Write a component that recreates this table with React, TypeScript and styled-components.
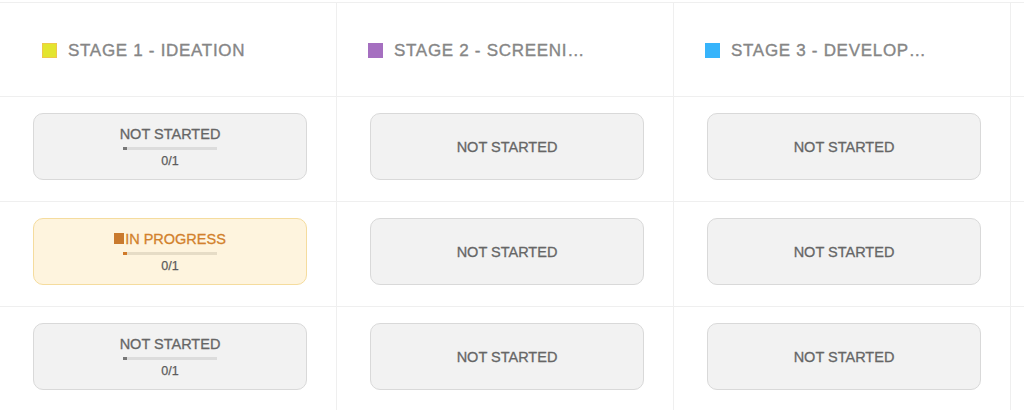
import React from "react";
import styled, { createGlobalStyle } from "styled-components";

const GlobalStyle = createGlobalStyle`
  html, body { margin: 0; padding: 0; background: #ffffff; }
  body {
    font-family: "Liberation Sans", Arial, sans-serif;
    overflow: hidden;
    width: 1024px;
    height: 410px;
  }
`;

const Board = styled.div`
  margin-top: 2px;
  border-top: 1px solid #efefef;
  display: grid;
  grid-template-columns: 337px 337px 337px 337px;
  width: 1024px;
  overflow: hidden;
`;

const HeaderCell = styled.div<{ $pad: number }>`
  box-sizing: border-box;
  height: 94px;
  border-right: 1px solid #efefef;
  border-bottom: 1px solid #efefef;
  display: flex;
  align-items: center;
  gap: 11px;
  padding-left: ${(p) => p.$pad}px;
  padding-top: 2px;
`;

const Swatch = styled.span<{ $color: string; $edge?: string }>`
  width: 15px;
  height: 15px;
  flex: none;
  box-sizing: border-box;
  background: ${(p) => p.$color};
  border: 1px solid ${(p) => p.$edge ?? p.$color};
`;

const Title = styled.span`
  font-size: 17px;
  letter-spacing: 0.7px;
  color: #868686;
  -webkit-text-stroke: 0.35px #868686;
  max-width: 200px;
  white-space: nowrap;
  overflow: hidden;
  text-overflow: ellipsis;
`;

const Cell = styled.div`
  box-sizing: border-box;
  height: 105px;
  border-right: 1px solid #efefef;
  border-bottom: 1px solid #efefef;
  padding: 16px 0 0 33px;
`;

const Card = styled.div<{ $active?: boolean }>`
  box-sizing: border-box;
  width: 274px;
  height: 67px;
  border-radius: 10px;
  border: 1.5px solid ${(p) => (p.$active ? "#f5dc9e" : "#d9d9d9")};
  background: ${(p) => (p.$active ? "#fef4de" : "#f2f2f2")};
  display: flex;
  flex-direction: column;
  align-items: center;
  justify-content: center;
`;

const Label = styled.div<{ $active?: boolean }>`
  display: flex;
  align-items: center;
  font-size: 14.5px;
  line-height: 16px;
  color: ${(p) => (p.$active ? "#d2812c" : "#666666")};
  -webkit-text-stroke: 0.3px ${(p) => (p.$active ? "#d2812c" : "#666666")};
  white-space: nowrap;
`;

const LabelIcon = styled.span`
  width: 10px;
  height: 11px;
  background: #c97a2e;
  margin-right: 1px;
`;

const Track = styled.div<{ $active?: boolean }>`
  margin-top: 5px;
  width: 94px;
  height: 3px;
  background: ${(p) => (p.$active ? "#e6dcc6" : "#dcdcdc")};
  display: flex;
`;

const Fill = styled.div<{ $active?: boolean }>`
  height: 100%;
  background: ${(p) => (p.$active ? "#d07a2a" : "#777777")};
`;

const Count = styled.div`
  margin-top: 4px;
  font-size: 12.5px;
  line-height: 14px;
  color: #5c5c5c;
  -webkit-text-stroke: 0.25px #5c5c5c;
`;

type Stage = { title: string; color: string; edge?: string; pad: number };

const stages: Stage[] = [
  { title: "STAGE 1 - IDEATION", color: "#e3e52f", edge: "#efc84a", pad: 42 },
  { title: "STAGE 2 - SCREENING", color: "#a56fc0", pad: 31 },
  { title: "STAGE 3 - DEVELOPMENT", color: "#37b4fb", pad: 31 },
];

type CardData = { status: "not" | "progress"; progress?: boolean };

const rows: CardData[][] = [
  [{ status: "not", progress: true }, { status: "not" }, { status: "not" }],
  [{ status: "progress", progress: true }, { status: "not" }, { status: "not" }],
  [{ status: "not", progress: true }, { status: "not" }, { status: "not" }],
];

function StatusCard({ data }: { data: CardData }) {
  const active = data.status === "progress";
  return (
    <Card $active={active}>
      <Label $active={active}>
        {active && <LabelIcon />}
        {active ? "IN PROGRESS" : "NOT STARTED"}
      </Label>
      {data.progress && (
        <>
          <Track $active={active}>
            <Fill $active={active} style={{ width: "4px" }} />
          </Track>
          <Count>0/1</Count>
        </>
      )}
    </Card>
  );
}

export default function App() {
  return (
    <>
      <GlobalStyle />
      <Board>
        {stages.map((s) => (
          <HeaderCell key={s.title} $pad={s.pad}>
            <Swatch $color={s.color} $edge={s.edge} />
            <Title>{s.title}</Title>
          </HeaderCell>
        ))}
        <HeaderCell $pad={0} />
        {rows.map((row, i) => (
          <React.Fragment key={i}>
            {row.map((c, j) => (
              <Cell key={j}>
                <StatusCard data={c} />
              </Cell>
            ))}
            <Cell />
          </React.Fragment>
        ))}
      </Board>
    </>
  );
}
